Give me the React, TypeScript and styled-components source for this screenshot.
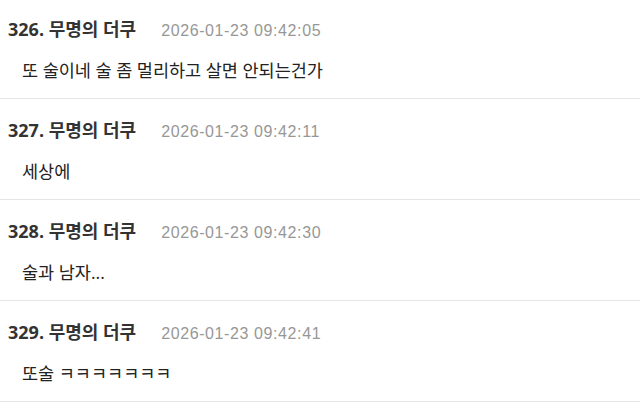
import React, { FC } from 'react';
import styled, { createGlobalStyle } from 'styled-components';

interface Comment {
  no: number;
  author: string;
  date: string;
  text: string;
}

const COMMENTS: Comment[] = [
  { no: 326, author: '무명의 더쿠', date: '2026-01-23 09:42:05', text: '또 술이네 술 좀 멀리하고 살면 안되는건가' },
  { no: 327, author: '무명의 더쿠', date: '2026-01-23 09:42:11', text: '세상에' },
  { no: 328, author: '무명의 더쿠', date: '2026-01-23 09:42:30', text: '술과 남자...' },
  { no: 329, author: '무명의 더쿠', date: '2026-01-23 09:42:41', text: '또술 ㅋㅋㅋㅋㅋㅋㅋ' }
];

const GlobalStyle = createGlobalStyle`
  body {
    margin: 0;
    background: #fff;
    font-family: "Open Sans", "Noto Sans CJK KR", sans-serif;
  }
`;

const List = styled.ul`
  list-style: none;
  margin: -2px 0 0;
  padding: 0;
`;

const Item = styled.li`
  display: flex;
  flex-direction: column;
  height: 101px;
  box-sizing: border-box;
  padding: 19px 0 0 8px;
  border-bottom: 1px solid #e6e6e6;
`;

const Header = styled.div`
  display: flex;
  align-items: baseline;
  gap: 25px;
  line-height: 24px;
`;

const Author = styled.span`
  font-size: 18px;
  font-weight: 700;
  color: #333;
`;

const DateText = styled.span`
  font-family: "Liberation Sans", sans-serif;
  font-size: 16px;
  letter-spacing: 0.6px;
  color: #979797;
`;

const Body = styled.p`
  margin: 15px 0 0 14px;
  font-size: 17.5px;
  line-height: 24px;
  color: #222;
`;

const CommentRow: FC<{ comment: Comment }> = ({ comment }) => (
  <Item>
    <Header>
      <Author>
        {comment.no}. {comment.author}
      </Author>
      <DateText>{comment.date}</DateText>
    </Header>
    <Body>{comment.text}</Body>
  </Item>
);

const App: FC = () => (
  <>
    <GlobalStyle />
    <List>
      {COMMENTS.map((c) => (
        <CommentRow key={c.no} comment={c} />
      ))}
    </List>
  </>
);

export default App;
